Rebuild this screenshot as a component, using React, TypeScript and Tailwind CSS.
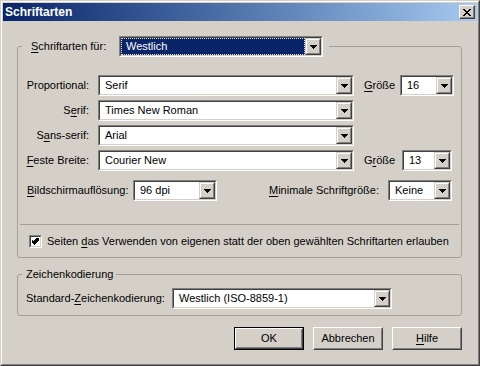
import React from "react";

const FACE = "bg-[#D4D0C8]";

function Arrow() {
  return (
    <svg width="7" height="4" viewBox="0 0 7 4" shapeRendering="crispEdges">
      <path d="M0 0h7v1h-1v1h-1v1h-1v1h-1v-1h-1v-1h-1v-1h-1z" fill="#000" />
    </svg>
  );
}

function DropBtn() {
  return (
    <div className="w-[16px] h-full border border-t-[#D4D0C8] border-l-[#D4D0C8] border-r-[#404040] border-b-[#404040]">
      <div className="w-full h-full border border-t-white border-l-white border-r-[#808080] border-b-[#808080] bg-[#D4D0C8] flex items-center justify-center">
        <Arrow />
      </div>
    </div>
  );
}

function Combo({ w, value, selected }: { w: string; value: string; selected?: boolean }) {
  return (
    <div className={"flex h-[21px] shrink-0 border border-t-[#808080] border-l-[#808080] border-r-white border-b-white " + w}>
      <div className="flex flex-1 min-w-0 border border-t-[#404040] border-l-[#404040] border-r-[#D4D0C8] border-b-[#D4D0C8] bg-white">
        {selected ? (
          <div className="flex-1 min-w-0 bg-[#0A246A] p-0">
            <div className="h-full flex items-center pl-[4px] border border-dotted border-[#e8e4c8] text-white whitespace-nowrap">
              {value}
            </div>
          </div>
        ) : (
          <div className="flex-1 min-w-0 flex items-center pl-[5px] whitespace-nowrap overflow-hidden">{value}</div>
        )}
        <DropBtn />
      </div>
    </div>
  );
}

function U({ children }: { children: React.ReactNode }) {
  return <span className="underline decoration-1 underline-offset-[2px]">{children}</span>;
}

function Btn({ children, def }: { children: React.ReactNode; def?: boolean }) {
  const inner = (
    <div className="w-full h-full border border-t-white border-l-white border-r-[#404040] border-b-[#404040]">
      <div className="w-full h-full border border-t-[#D4D0C8] border-l-[#D4D0C8] border-r-[#808080] border-b-[#808080] flex items-center justify-center bg-[#D4D0C8]">
        {children}
      </div>
    </div>
  );
  return def ? (
    <div className="w-[70px] h-[23px] border border-black">{inner}</div>
  ) : (
    <div className="w-[70px] h-[23px]">{inner}</div>
  );
}

function Checkbox() {
  return (
    <div className="w-[13px] h-[13px] shrink-0 border border-t-[#808080] border-l-[#808080] border-r-white border-b-white">
      <div className="w-full h-full border border-t-[#404040] border-l-[#404040] border-r-[#D4D0C8] border-b-[#D4D0C8] bg-white flex items-center justify-center">
        <svg width="7" height="7" viewBox="0 0 7 7" shapeRendering="crispEdges">
          <path
            d="M6 0h1v3h-1v1h-1v1h-1v1h-1v1h-1v-1h-1v-1h-1v-1h-1v-3h1v1h1v1h1v-1h1v-1h1v-1h1z"
            fill="#000"
          />
        </svg>
      </div>
    </div>
  );
}

export default function App() {
  return (
    <div className="w-[480px] h-[366px] font-['Liberation_Sans',Arial,sans-serif] text-[11px] leading-[13px] text-black">
      <div className="w-full h-full border border-t-[#D4D0C8] border-l-[#D4D0C8] border-r-[#404040] border-b-[#404040]">
        <div className={"w-full h-full border border-t-white border-l-white border-r-[#808080] border-b-[#808080] p-[1px] flex flex-col " + FACE}>
          {/* Title bar */}
          <div className="h-[18px] shrink-0 flex items-center bg-linear-to-r from-[#0A246A] to-[#A6CAF0] pl-[2px] pr-[2px]">
            <span className="text-white font-bold text-[12px] leading-[14px] flex-1">Schriftarten</span>
            <div className="w-[16px] h-[14px] border border-t-white border-l-white border-r-[#404040] border-b-[#404040]">
              <div className="w-full h-full border border-t-[#D4D0C8] border-l-[#D4D0C8] border-r-[#808080] border-b-[#808080] bg-[#D4D0C8] flex items-center justify-center">
                <svg width="8" height="7" viewBox="0 0 8 7" shapeRendering="crispEdges">
                  <path
                    d="M0 0h2v1h1v1h2v-1h1v-1h2v1h-1v1h-1v1h-1v1h1v1h1v1h1v1h-2v-1h-1v-1h-2v1h-1v1h-2v-1h1v-1h1v-1h1v-1h-1v-1h-1v-1h-1z"
                    fill="#000"
                  />
                </svg>
              </div>
            </div>
          </div>

          {/* Body */}
          <div className="flex-1 flex flex-col pl-[14px] pr-[15px] pt-[15px]">
            <fieldset className="border border-[#a19f98] rounded-[3px] pt-[18px] pb-[9px] min-w-0">
              <legend className="ml-[4px] pl-[9px] pr-[6px]">
                <div className="flex items-center h-[21px]">
                  <span className="w-[88px]">
                    <U>S</U>chriftarten für:
                  </span>
                  <Combo w="w-[204px]" value="Westlich" selected />
                </div>
              </legend>

              <div className="flex flex-col gap-[4px]">
                <div className="flex items-center">
                  <span className="w-[71px] text-right">Proportional:</span>
                  <div className="ml-[9px]">
                    <Combo w="w-[256px]" value="Serif" />
                  </div>
                  <span className="ml-[10px] w-[36px]">
                    <U>G</U>röße
                  </span>
                  <Combo w="w-[54px]" value="16" />
                </div>
                <div className="flex items-center">
                  <span className="w-[71px] text-right">
                    S<U>e</U>rif:
                  </span>
                  <div className="ml-[9px]">
                    <Combo w="w-[256px]" value="Times New Roman" />
                  </div>
                </div>
                <div className="flex items-center">
                  <span className="w-[71px] text-right">
                    S<U>a</U>ns-serif:
                  </span>
                  <div className="ml-[9px]">
                    <Combo w="w-[256px]" value="Arial" />
                  </div>
                </div>
                <div className="flex items-center">
                  <span className="w-[71px] text-right">
                    <U>F</U>este Breite:
                  </span>
                  <div className="ml-[9px]">
                    <Combo w="w-[256px]" value="Courier New" />
                  </div>
                  <span className="ml-[10px] w-[38px]">
                    G<U>r</U>öße
                  </span>
                  <Combo w="w-[50px]" value="13" />
                </div>
              </div>

              <div className="flex items-center mt-[9px] pl-[9px]">
                <span className="w-[106px]">
                  <U>B</U>ildschirmauflösung:
                </span>
                <Combo w="w-[84px]" value="96 dpi" />
                <span className="w-[162px] text-right">
                  <U>M</U>inimale Schriftgröße:
                </span>
                <div className="ml-[9px]">
                  <Combo w="w-[64px]" value="Keine" />
                </div>
              </div>

              <div className="mt-[23px] mx-[2px] h-px bg-[#a19f98]" />

              <div className="flex items-center mt-[10px] pl-[11px]">
                <Checkbox />
                <span className="ml-[5px] whitespace-nowrap">
                  Seiten <U>d</U>as Verwenden von eigenen statt der oben gewählten Schriftarten erlauben
                </span>
              </div>
            </fieldset>

            <fieldset className="mt-[10px] border border-[#a19f98] rounded-[3px] pt-[7px] pb-[6px] min-w-0">
              <legend className="ml-[4px] pl-[4px] pr-[3px] leading-[13px]">Zeichenkodierung</legend>
              <div className="flex items-center pl-[8px]">
                <span className="w-[146px]">
                  Standard-<U>Z</U>eichenkodierung:
                </span>
                <Combo w="w-[220px]" value="Westlich (ISO-8859-1)" />
              </div>
            </fieldset>

            <div className="flex justify-end gap-[9px] mt-[11px]">
              <Btn def>OK</Btn>
              <Btn>Abbrechen</Btn>
              <Btn>
                <span>
                  <U>H</U>ilfe
                </span>
              </Btn>
            </div>
          </div>
        </div>
      </div>
    </div>
  );
}
